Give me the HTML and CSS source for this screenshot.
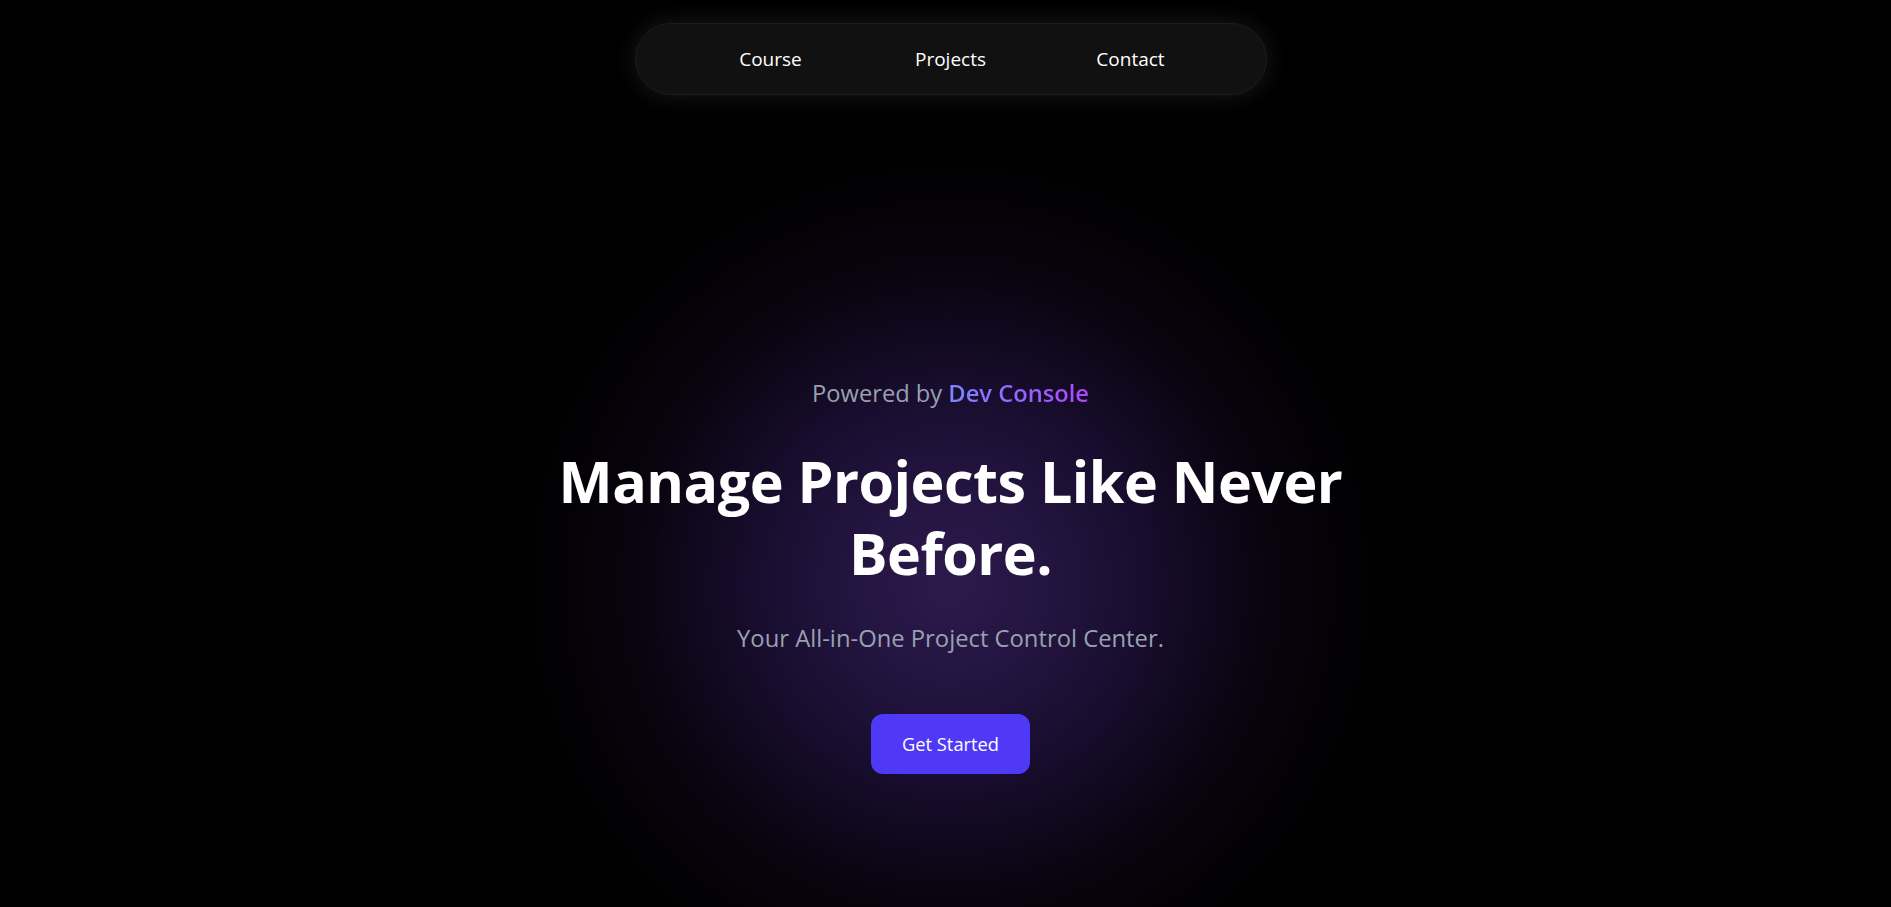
FILE: index.html
```html
<!DOCTYPE html>
<html lang="en">
<head>
<meta charset="utf-8">
<title>Dev Console</title>
<link rel="stylesheet" href="styles.css">
</head>
<body>
<header class="topbar">
  <nav class="nav">
    <a class="nav-link" href="#">Course</a>
    <a class="nav-link" href="#">Projects</a>
    <a class="nav-link" href="#">Contact</a>
  </nav>
</header>
<main class="hero">
  <p class="powered">Powered by <span class="brand">Dev Console</span></p>
  <h1 class="title">Manage Projects Like Never<br>Before.</h1>
  <p class="subtitle">Your All-in-One Project Control Center.</p>
  <a class="cta" href="#">Get Started</a>
</main>
</body>
</html>
```
FILE: styles.css
```css
* { box-sizing: border-box; }
html, body { height: 100%; }
body {
  margin: 0;
  padding-left: 10px;
  min-height: 907px;
  background-color: #000;
  background-image: radial-gradient(circle 435px at 950px 585px, #2c1a4c 0%, #251542 20%, #180d2e 45%, #09040f 72%, #000 100%);
  font-family: "Open Sans", "Noto Sans", sans-serif;
  color: #fff;
  overflow: hidden;
}
.topbar {
  display: flex;
  justify-content: center;
  padding-top: 23px;
}
.nav {
  width: 632px;
  height: 72px;
  display: flex;
  justify-content: center;
  align-items: center;
  background: #111;
  border: 1px solid #1c1c1c;
  border-radius: 9999px;
  box-shadow: 0 0 24px rgba(255, 255, 255, 0.1);
}
.nav-link {
  width: 180px;
  text-align: center;
  color: #fff;
  text-decoration: none;
  font-size: 19px;
  line-height: 28px;
}
.hero {
  display: flex;
  flex-direction: column;
  align-items: center;
  text-align: center;
  padding-top: 282px;
}
.powered {
  margin: 0;
  font-size: 23.7px;
  line-height: 32px;
  color: #99a1af;
}
.brand {
  background: linear-gradient(90deg, #7c86ff, #ad46ff);
  -webkit-background-clip: text;
  background-clip: text;
  color: transparent;
  font-weight: 600;
}
.title {
  margin: 36px 0 0;
  font-size: 57.4px;
  line-height: 72px;
  font-weight: 700;
  letter-spacing: -0.5px;
}
.subtitle {
  margin: 33px 0 0;
  font-size: 23.8px;
  line-height: 32px;
  color: #99a1af;
}
.cta {
  margin-top: 60px;
  display: inline-block;
  padding: 16px 31px;
  background: #4f39f6;
  color: #fff;
  text-decoration: none;
  font-size: 18.3px;
  line-height: 28px;
  border-radius: 12px;
}
```
